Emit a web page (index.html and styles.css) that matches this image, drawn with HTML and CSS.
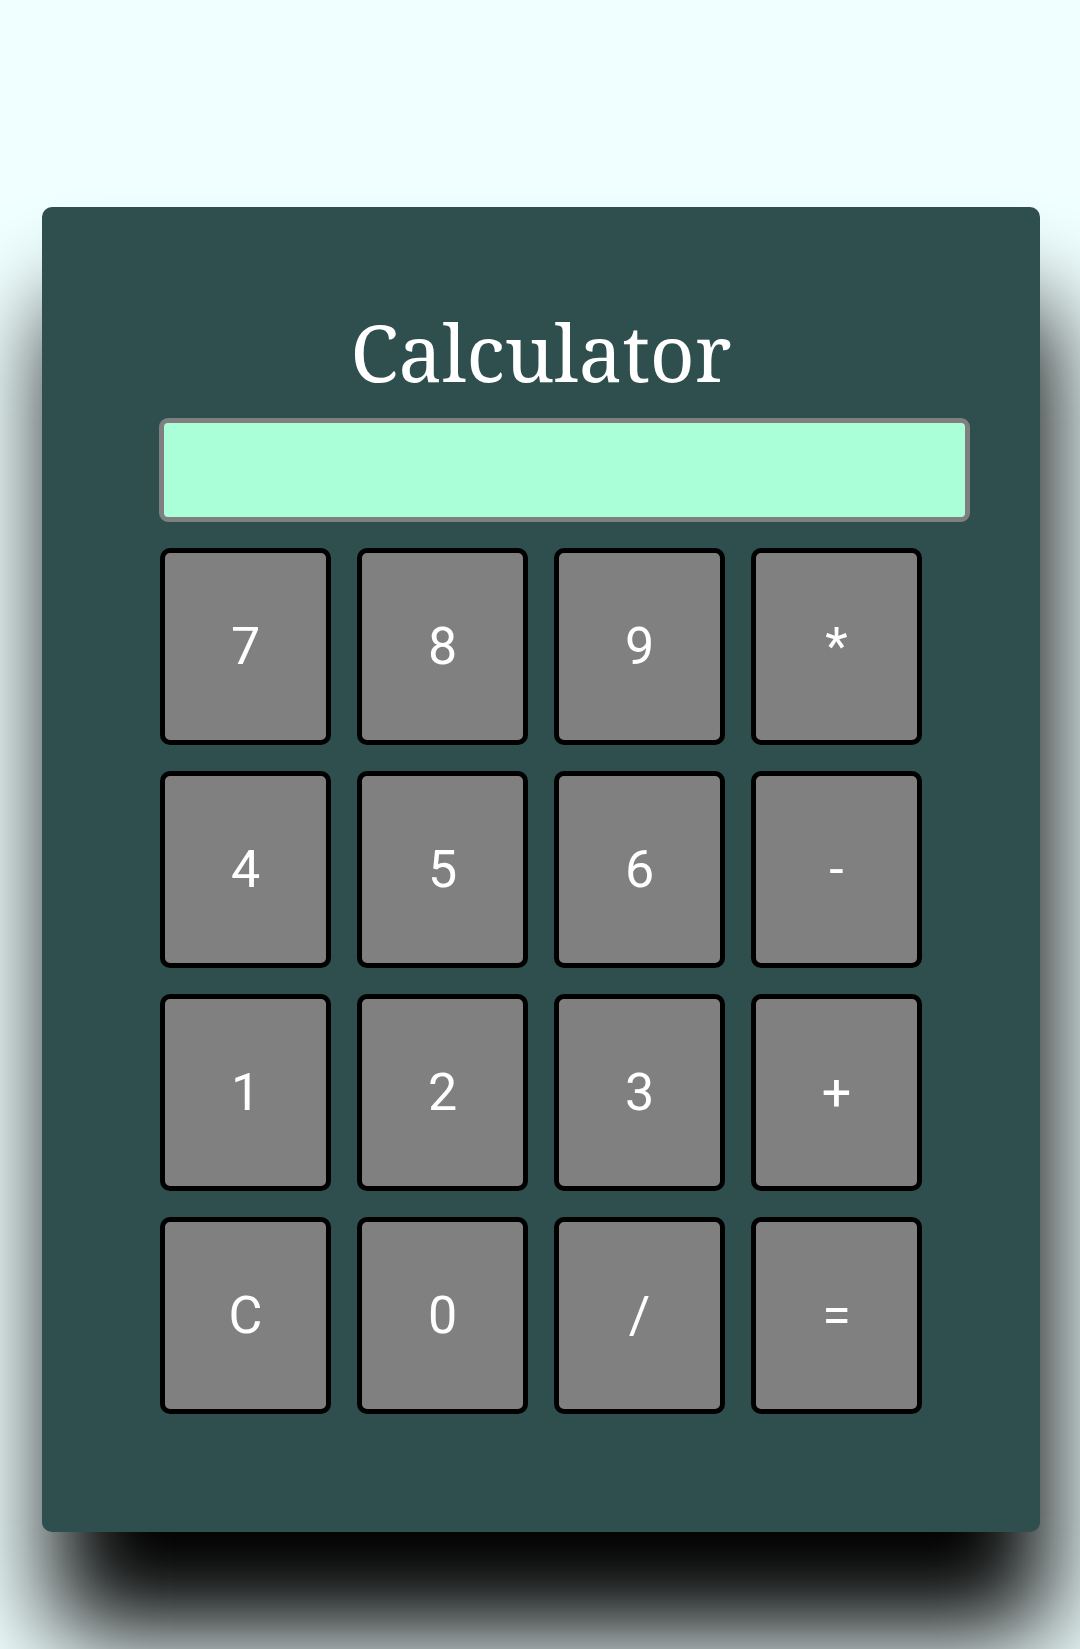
FILE: index.html
```html
<!DOCTYPE html>
<html lang="en">
<head>
<meta charset="utf-8">
<title>Calculator</title>
<link rel="stylesheet" href="styles.css">
</head>
<body>
  <div class="card">
    <h1 class="title">Calculator</h1>
    <div class="body">
      <div class="display"></div>
      <div class="keys">
        <button class="key">7</button>
        <button class="key">8</button>
        <button class="key">9</button>
        <button class="key">*</button>
        <button class="key">4</button>
        <button class="key">5</button>
        <button class="key">6</button>
        <button class="key">-</button>
        <button class="key">1</button>
        <button class="key">2</button>
        <button class="key">3</button>
        <button class="key">+</button>
        <button class="key">C</button>
        <button class="key">0</button>
        <button class="key">/</button>
        <button class="key">=</button>
      </div>
    </div>
  </div>
</body>
</html>
```
FILE: styles.css
```css
html, body {
  margin: 0;
  padding: 0;
}
body {
  background: #f0ffff;
  height: 1649px;
  overflow: hidden;
  padding-top: 207px;
  box-sizing: border-box;
}
.card {
  margin-left: 42px;
  width: 998px;
  height: 1325px;
  box-sizing: border-box;
  background: #2f4f4f;
  border-radius: 10px;
  box-shadow: 10px 100px 100px #000;
  display: flex;
  flex-direction: column;
}
.title {
  margin: 95px 0 0 0;
  height: 100px;
  line-height: 100px;
  font-family: "Noto Serif", "DejaVu Serif", serif;
  font-weight: normal;
  font-size: 78px;
  color: #ffffff;
  text-align: center;
}
.body {
  padding-left: 117px;
  margin-top: 16px;
}
.display {
  width: 811px;
  height: 104px;
  box-sizing: border-box;
  border: 5px solid #7f7f7f;
  border-radius: 9px;
  background: #abffd8;
}
.keys {
  margin-top: 26px;
  margin-left: 1px;
  display: grid;
  grid-template-columns: repeat(4, 171px);
  grid-auto-rows: 197px;
  column-gap: 26px;
  row-gap: 26px;
}
.key {
  box-sizing: border-box;
  border: 5px solid #000;
  border-radius: 10px;
  background: #808080;
  color: #ffffff;
  font-family: Roboto, "Liberation Sans", sans-serif;
  font-size: 52px;
  padding: 0;
  margin: 0;
}
```
